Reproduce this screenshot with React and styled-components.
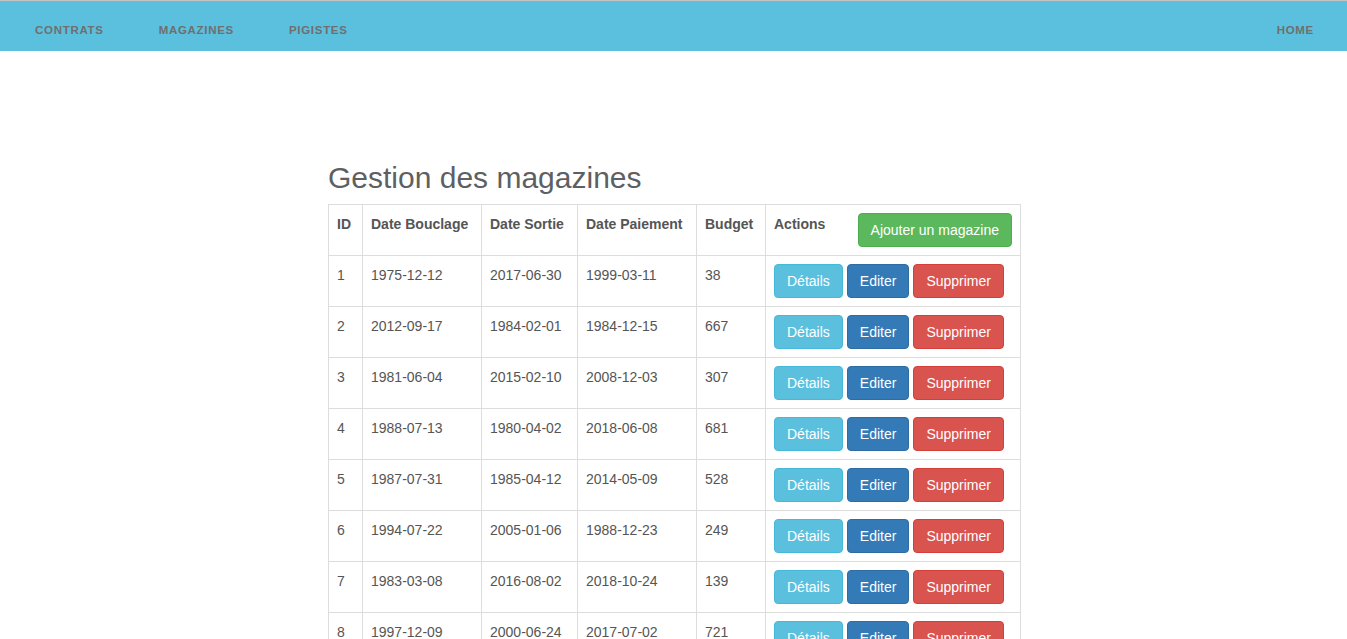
import styled, { createGlobalStyle } from 'styled-components'

const GlobalStyle = createGlobalStyle`
  * { box-sizing: border-box; }
  body {
    margin: 0;
    font-family: "Liberation Sans", Arial, sans-serif;
    font-size: 14px;
    line-height: 1.42857;
    color: #555;
    background: #fff;
  }
`

const magazines = [
  { id: 1, bouclage: '1975-12-12', sortie: '2017-06-30', paiement: '1999-03-11', budget: 38 },
  { id: 2, bouclage: '2012-09-17', sortie: '1984-02-01', paiement: '1984-12-15', budget: 667 },
  { id: 3, bouclage: '1981-06-04', sortie: '2015-02-10', paiement: '2008-12-03', budget: 307 },
  { id: 4, bouclage: '1988-07-13', sortie: '1980-04-02', paiement: '2018-06-08', budget: 681 },
  { id: 5, bouclage: '1987-07-31', sortie: '1985-04-12', paiement: '2014-05-09', budget: 528 },
  { id: 6, bouclage: '1994-07-22', sortie: '2005-01-06', paiement: '1988-12-23', budget: 249 },
  { id: 7, bouclage: '1983-03-08', sortie: '2016-08-02', paiement: '2018-10-24', budget: 139 },
  { id: 8, bouclage: '1997-12-09', sortie: '2000-06-24', paiement: '2017-07-02', budget: 721 },
  { id: 9, bouclage: '2003-11-19', sortie: '1991-09-14', paiement: '1979-02-27', budget: 412 },
  { id: 10, bouclage: '1978-05-25', sortie: '2010-03-16', paiement: '1996-08-30', budget: 95 },
]

const colors = {
  info: ['#5bc0de', '#46b8da'],
  primary: ['#337ab7', '#2e6da4'],
  danger: ['#d9534f', '#d43f3a'],
  success: ['#5cb85c', '#4cae4c'],
}

function App() {
  return (
    <>
      <GlobalStyle />
      <Navbar>
        <NavList>
          <NavLink href="#">Contrats</NavLink>
          <NavLink href="#">Magazines</NavLink>
          <NavLink href="#">Pigistes</NavLink>
        </NavList>
        <NavList>
          <NavLink href="#">Home</NavLink>
        </NavList>
      </Navbar>

      <Main>
        <Title>Gestion des magazines</Title>
        <Table>
          <colgroup>
            <col style={{ width: 34 }} />
            <col style={{ width: 119 }} />
            <col style={{ width: 96 }} />
            <col style={{ width: 119 }} />
            <col style={{ width: 69 }} />
            <col style={{ width: 255 }} />
          </colgroup>
          <thead>
            <tr>
              <th>ID</th>
              <th>Date Bouclage</th>
              <th>Date Sortie</th>
              <th>Date Paiement</th>
              <th>Budget</th>
              <th>
                <HeadActions>
                  <span>Actions</span>
                  <Button $variant="success">Ajouter un magazine</Button>
                </HeadActions>
              </th>
            </tr>
          </thead>
          <tbody>
            {magazines.map((m) => (
              <tr key={m.id}>
                <td>{m.id}</td>
                <td>{m.bouclage}</td>
                <td>{m.sortie}</td>
                <td>{m.paiement}</td>
                <td>{m.budget}</td>
                <td>
                  <ButtonGroup>
                    <Button $variant="info">Détails</Button>
                    <Button $variant="primary">Editer</Button>
                    <Button $variant="danger">Supprimer</Button>
                  </ButtonGroup>
                </td>
              </tr>
            ))}
          </tbody>
        </Table>
      </Main>
    </>
  )
}

const Navbar = styled.nav`
  display: flex;
  justify-content: space-between;
  height: 51px;
  background: #5bc0de;
  border-top: 1px solid #c4c4c4;
  padding: 0 33px 0 35px;
`

const NavList = styled.div`
  display: flex;
  gap: 55px;
`

const NavLink = styled.a`
  display: block;
  padding-top: 19px;
  line-height: 20px;
  font-size: 11.5px;
  font-weight: bold;
  letter-spacing: 0.7px;
  text-transform: uppercase;
  text-decoration: none;
  color: #6f6f6f;
`

const Main = styled.main`
  width: 693px;
  margin: 0 auto;
  padding: 90px 0 0 1px;
`

const Title = styled.h2`
  margin: 20px 0 10px;
  font-size: 30px;
  font-weight: 500;
  line-height: 1.1;
  color: #5d5f62;
`

const Table = styled.table`
  width: 692px;
  table-layout: fixed;
  border-collapse: collapse;
  border: 1px solid #ddd;

  th,
  td {
    padding: 8px;
    border: 1px solid #ddd;
    text-align: left;
    vertical-align: top;
    white-space: nowrap;
    line-height: 22px;
  }

  th {
    font-weight: bold;
  }
`

const HeadActions = styled.div`
  display: flex;
  justify-content: space-between;
  align-items: flex-start;
`

const ButtonGroup = styled.div`
  display: flex;
  gap: 4px;
`

const Button = styled.button`
  display: inline-block;
  padding: 6px 12px;
  font-family: inherit;
  font-size: 14px;
  font-weight: normal;
  line-height: 20px;
  color: #fff;
  background: ${({ $variant }) => colors[$variant][0]};
  border: 1px solid ${({ $variant }) => colors[$variant][1]};
  border-radius: 4px;
  cursor: pointer;
`

export default App
